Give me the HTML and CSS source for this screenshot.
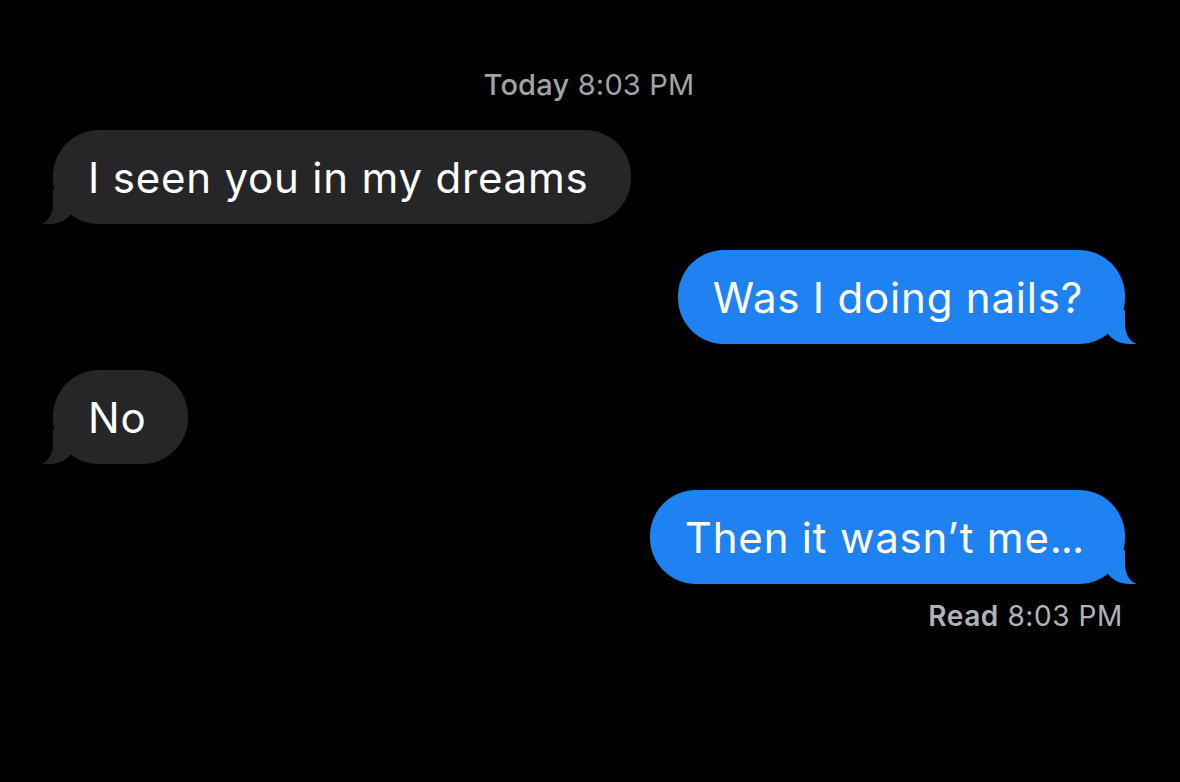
FILE: index.html
```html
<!DOCTYPE html>
<html>
<head>
<meta charset="utf-8">
<link rel="stylesheet" href="styles.css">
</head>
<body>
<div class="thread">
  <div class="stamp"><span class="stamp-day">Today</span> 8:03 PM</div>
  <div class="row row-in"><div class="bubble in">I seen you in my dreams</div></div>
  <div class="row row-out"><div class="bubble out">Was I doing nails?</div></div>
  <div class="row row-in"><div class="bubble in">No</div></div>
  <div class="row row-out"><div class="bubble out">Then it wasn’t me<span class="dots">...</span></div></div>
  <div class="receipt"><span class="receipt-label">Read</span> 8:03 PM</div>
</div>
</body>
</html>
```
FILE: styles.css
```css
html, body {
  margin: 0;
  padding: 0;
  background: #000;
  height: 100%;
}
body {
  font-family: "Inter", "Liberation Sans", sans-serif;
  color: #fff;
  overflow: hidden;
}
.thread {
  display: flex;
  flex-direction: column;
  padding: 66px 55px 0 53px;
}
.stamp {
  text-align: center;
  color: #a3a3a6;
  font-size: 29px;
  line-height: 38px;
  margin-bottom: 26px;
  letter-spacing: 0.2px;
}
.stamp-day { font-weight: 500; }
.row {
  display: flex;
}
.row-in { justify-content: flex-start; }
.row-out { justify-content: flex-end; }
.row + .row { margin-top: 26px; }
.bubble {
  position: relative;
  height: 94px;
  display: flex;
  align-items: center;
  font-size: 42px;
  border-radius: 46px;
  box-sizing: border-box;
  white-space: nowrap;
  letter-spacing: 0.8px;
}
.dots { letter-spacing: -1px; }
.in {
  background: #262628;
  padding: 0 42px 0 35px;
}
.out {
  background: #1f82f3;
  padding: 0 42px 0 35px;
}
.bubble::before,
.bubble::after {
  content: "";
  position: absolute;
  bottom: 0;
}
.in::before {
  left: -11px;
  width: 34px;
  height: 34px;
  background: #262628;
  border-bottom-right-radius: 26px 24px;
}
.in::after {
  left: -26px;
  width: 26px;
  height: 34px;
  background: #000;
  border-bottom-right-radius: 14px 20px;
}
.out::before {
  right: -12px;
  width: 34px;
  height: 34px;
  background: #1f82f3;
  border-bottom-left-radius: 26px 24px;
}
.out::after {
  right: -27px;
  width: 27px;
  height: 34px;
  background: #000;
  border-bottom-left-radius: 14px 20px;
}
.receipt {
  align-self: flex-end;
  margin-top: 14px;
  font-size: 28px;
  line-height: 36px;
  color: #b3b3b6;
  letter-spacing: 0.6px;
  padding-right: 2px;
}
.receipt-label { font-weight: 600; }
```
